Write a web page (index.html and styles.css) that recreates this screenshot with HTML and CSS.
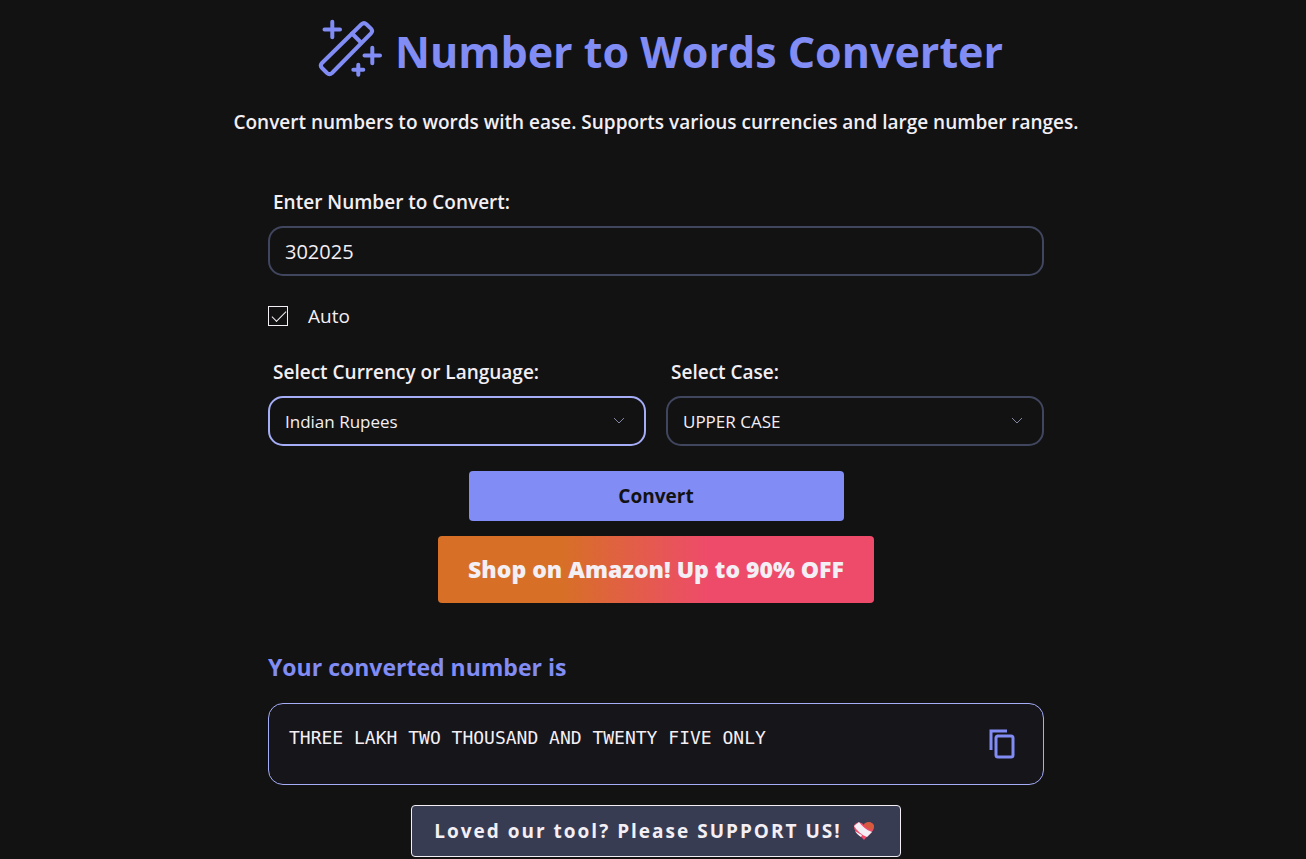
FILE: index.html
```
<!DOCTYPE html>
<html lang="en">

<head>
  <meta charset="UTF-8">
  <meta name="viewport" content="width=device-width, initial-scale=1.0">
  <title>Number to Words Converter</title>
  <link rel="stylesheet" href="styles.css">
</head>

<body>
  <header class="header">
    <h1 class="title">
      <svg class="wand" viewBox="10 9 66 60" aria-hidden="true">
        <path d="M54.5 14.2 Q57 12 59.4 14.2 L64 18.6 Q66.2 21 64 23.3 L25 63 Q22.5 65.3 20 63 L15 58 Q12.6 55.5 15 53 Z" />
        <path d="M45 23.5 L54 32.5" />
        <path d="M25.3 11.8 V27.3 M17.5 19.6 H33" />
        <path d="M65.3 37.8 V53.3 M57.5 45.5 H73" />
        <path d="M51.3 64.7 V54.7 M46.3 59.7 H56.3" />
      </svg>
      Number to Words Converter
    </h1>
    <p class="subtitle">Convert numbers to words with ease. Supports various currencies and large number ranges.</p>
  </header>

  <main class="container">
    <form id="convert-form" class="form">
      <div class="field">
        <label for="number">Enter Number to Convert:</label>
        <input type="text" id="number" class="control number" value="302025">
      </div>

      <div class="auto">
        <input type="checkbox" id="auto" checked>
        <label for="auto">Auto</label>
      </div>

      <div class="row">
        <div class="field">
          <label for="currency">Select Currency or Language:</label>
          <div class="select">
            <select id="currency" class="control active">
              <option>Indian Rupees</option>
            </select>
            <svg class="arrow" viewBox="0 0 12 8" aria-hidden="true"><path d="M1 1 L6 6 L11 1" /></svg>
          </div>
        </div>
        <div class="field">
          <label for="case">Select Case:</label>
          <div class="select">
            <select id="case" class="control">
              <option>UPPER CASE</option>
            </select>
            <svg class="arrow" viewBox="0 0 12 8" aria-hidden="true"><path d="M1 1 L6 6 L11 1" /></svg>
          </div>
        </div>
      </div>

      <button type="submit" class="convert">Convert</button>
    </form>

    <a class="shop" href="#">Shop on Amazon! Up to 90% OFF</a>

    <h2 class="result-title">Your converted number is</h2>
    <div class="result">
      <output class="words" for="number">THREE LAKH TWO THOUSAND AND TWENTY FIVE ONLY</output>
      <button type="button" class="copy" aria-label="Copy">
        <svg viewBox="0 0 26 30" aria-hidden="true">
          <path d="M2 21 V2 H18" />
          <path d="M8 7 H22 Q24 7 24 9 V26 Q24 28 22 28 H9 Q7 28 7 26 V9 Q7 7 9 7" />
        </svg>
      </button>
    </div>

    <a class="support" href="#">Loved our tool? Please SUPPORT US!
      <svg class="heart" viewBox="0 0 20 20" aria-hidden="true">
        <path fill="#ee4b6a" d="M10 19 C7 15 0 11 0 6 C0 1 7 0 10 4 C12 0 20 0 20 6 C20 11 13 15 10 19 Z" />
        <path fill="#f3eff5" d="M0 5 L5 1 C8 5 12 9 18 11 L13 16 C8 14 3 10 0 5 Z" />
        <path fill="#f3eff5" d="M1 10 C3 11 5 13 8 14 L7 16 C4 14 2 12 1 10 Z" />
        <path fill="#d75a3c" d="M10 3 C13 0 19 1 20 5 L18 9 C14 8 11 6 10 3 Z" />
      </svg>
    </a>
  </main>

  <script>
    const form = document.getElementById('convert-form');

    form.addEventListener('submit', (event) => {
      event.preventDefault();
    });

    document.querySelector('.copy').addEventListener('click', () => {
      navigator.clipboard.writeText(document.querySelector('.words').textContent);
    });
  </script>
</body>

</html>
```
FILE: styles.css
```
* {
  box-sizing: border-box;
}

body {
  margin: 0;
  padding: 16px 10px 0 16px;
  background-color: #121212;
  color: #f3eff5;
  font-family: "Segoe UI", "Open Sans", "Noto Sans", sans-serif;
  font-size: 19px;
  line-height: 28px;
}

.header {
  text-align: center;
}

.title {
  display: flex;
  justify-content: center;
  align-items: center;
  gap: 12px;
  margin: 0;
  padding-left: 8px;
  color: #818cf4;
  font-size: 43px;
  font-weight: 700;
  line-height: 72px;
}

.wand {
  width: 66px;
  height: 60px;
  margin-bottom: 6px;
  fill: none;
  stroke: #818cf4;
  stroke-width: 4;
  stroke-linecap: round;
  stroke-linejoin: round;
}

.subtitle {
  margin: 20px 0 0;
  font-weight: 600;
}

.container {
  display: flex;
  flex-direction: column;
  align-items: center;
  max-width: 776px;
  margin: 52px auto 0;
}

.form {
  display: flex;
  flex-direction: column;
  width: 100%;
}

.field {
  flex: 1;
}

.field label {
  display: block;
  margin: 0 0 10px 5px;
  font-weight: 600;
}

.control {
  display: block;
  width: 100%;
  height: 50px;
  padding: 0 15px;
  background-color: #121212;
  color: #f3eff5;
  border: 2px solid #41465f;
  border-radius: 15px;
  outline: none;
  font-family: inherit;
  font-size: 17px;
}

.number {
  font-size: 20px;
}

.control.active,
.control:focus {
  border-color: #a5adf6;
}

.auto {
  display: flex;
  align-items: center;
  gap: 20px;
  margin: 26px 0 28px;
}

.auto input {
  appearance: none;
  width: 20px;
  height: 20px;
  margin: 0;
  border: 1px solid #f3eff5;
}

.auto input:checked::before {
  content: "";
  display: block;
  width: 13px;
  height: 6px;
  margin: 4px 3px;
  border: solid #f3eff5;
  border-width: 0 0 1px 1px;
  transform: rotate(-45deg);
}

.row {
  display: flex;
  gap: 20px;
}

.select {
  position: relative;
}

.select select {
  appearance: none;
}

.arrow {
  position: absolute;
  top: 21px;
  right: 21px;
  width: 12px;
  height: 8px;
  fill: none;
  stroke: #8086a4;
  pointer-events: none;
}

.convert {
  align-self: center;
  width: 375px;
  max-width: 100%;
  height: 50px;
  margin-top: 25px;
  background-color: #818cf4;
  color: #121212;
  border: none;
  border-radius: 4px;
  font-family: inherit;
  font-size: 19px;
  font-weight: 700;
  cursor: pointer;
}

.shop {
  margin-top: 15px;
  padding: 19px 30px 20px;
  background: linear-gradient(90deg, #d77026 28%, #ee4b6a 62%);
  color: #f3eff5;
  border-radius: 4px;
  font-size: 23px;
  font-weight: 800;
  text-decoration: none;
}

.result-title {
  align-self: flex-start;
  margin: 46px 0 18px;
  color: #818cf4;
  font-size: 23px;
  font-weight: 700;
  line-height: 36px;
}

.result {
  display: flex;
  justify-content: space-between;
  align-items: center;
  width: 100%;
  min-height: 82px;
  padding: 20px;
  background-color: #15151a;
  border: 1px solid #a5adf6;
  border-radius: 15px;
}

.words {
  align-self: flex-start;
  font-family: "DejaVu Sans Mono", monospace;
  font-size: 18px;
}

.copy {
  flex: none;
  width: 42px;
  height: 30px;
  padding: 0 8px;
  background: none;
  border: none;
  cursor: pointer;
}

.copy svg {
  display: block;
  width: 26px;
  height: 30px;
  fill: none;
  stroke: #818cf4;
  stroke-width: 3;
}

.support {
  display: flex;
  align-items: center;
  gap: 12px;
  margin-top: 20px;
  padding: 11px 26px 11px 22px;
  background-color: #383c52;
  color: #f3eff5;
  border: 1px solid #f3eff5;
  border-radius: 4px;
  font-weight: 700;
  letter-spacing: 2px;
  text-decoration: none;
}

.heart {
  width: 20px;
  height: 20px;
}
```
